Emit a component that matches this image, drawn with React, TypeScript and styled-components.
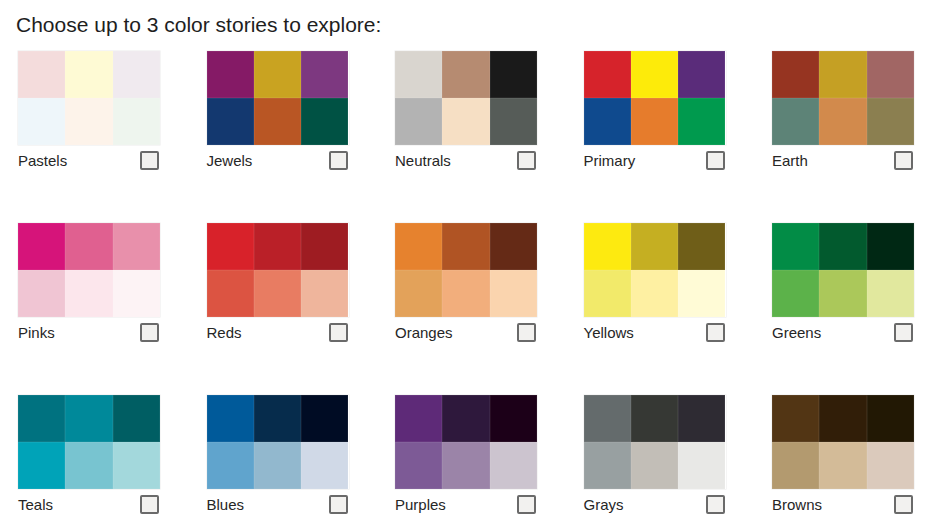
import React, { useState } from 'react';
import styled, { createGlobalStyle } from 'styled-components';

interface Story {
  name: string;
  colors: string[];
}

const stories: Story[] = [
  { name: 'Pastels', colors: ['#f4dcdc', '#fefad4', '#f0eaef', '#eef6fa', '#fdf3ea', '#eef5ee'] },
  { name: 'Jewels', colors: ['#851a66', '#c9a321', '#7d3880', '#13386f', '#b95624', '#005244'] },
  { name: 'Neutrals', colors: ['#d9d5cf', '#b68b71', '#1a1a1a', '#b3b3b3', '#f6dfc4', '#565c58'] },
  { name: 'Primary', colors: ['#d6232b', '#fdeb0a', '#5a2c7a', '#0f4a8e', '#e67c2c', '#009a4e'] },
  { name: 'Earth', colors: ['#963421', '#c5a024', '#a16664', '#5d8377', '#d28a4c', '#8b7f50'] },
  { name: 'Pinks', colors: ['#d6147a', '#e06090', '#e890ab', '#f0c5d3', '#fce6ec', '#fdf3f5'] },
  { name: 'Reds', colors: ['#d8222a', '#ba2028', '#9e1c22', '#dc5442', '#e87c62', '#efb59c'] },
  { name: 'Oranges', colors: ['#e6822e', '#b05424', '#652a16', '#e3a25a', '#f2ae7c', '#fad4ae'] },
  { name: 'Yellows', colors: ['#fdea10', '#c5af22', '#6f5e18', '#f2ea6a', '#fef0a2', '#fffbd6'] },
  { name: 'Greens', colors: ['#028c46', '#025a2e', '#002814', '#5cb24a', '#abc85a', '#e1e89e'] },
  { name: 'Teals', colors: ['#007280', '#00899a', '#005e63', '#00a3b8', '#78c4d0', '#a3d8dc'] },
  { name: 'Blues', colors: ['#005a9a', '#062c4c', '#000c24', '#60a4cd', '#92b8ce', '#d0d9e7'] },
  { name: 'Purples', colors: ['#5e2a78', '#2e183c', '#1c0018', '#7d5a96', '#9b84a8', '#ccc4cf'] },
  { name: 'Grays', colors: ['#646b6c', '#363834', '#2e2b33', '#98a0a1', '#c2beb7', '#e8e8e6'] },
  { name: 'Browns', colors: ['#523514', '#311e08', '#221804', '#b39a6f', '#d3bb98', '#dbcabc'] },
];

const GlobalStyle = createGlobalStyle`
  body {
    margin: 0;
    background: #ffffff;
    font-family: "Liberation Sans", Arial, sans-serif;
    color: #222222;
  }
`;

const Page = styled.div`
  padding: 13px 0 0 16px;
`;

const Title = styled.h2`
  margin: 0 0 14px 0;
  font-size: 21px;
  line-height: 24px;
  font-weight: 400;
  color: #1e1e1e;
`;

const Grid = styled.div`
  display: grid;
  grid-template-columns: repeat(5, 142px);
  column-gap: 46.5px;
  row-gap: 53px;
  padding-left: 2px;
`;

const Card = styled.div`
  display: flex;
  flex-direction: column;
`;

const Swatches = styled.div`
  display: grid;
  grid-template-columns: repeat(3, 1fr);
  grid-template-rows: 47px 47px;
  box-shadow: 0 0 0 0.5px rgba(0, 0, 0, 0.08);
`;

const Cell = styled.div<{ $color: string }>`
  background: ${(p) => p.$color};
  box-shadow: inset 0 0 0 0.5px rgba(255, 255, 255, 0.12);
`;

const LabelRow = styled.label`
  display: flex;
  justify-content: space-between;
  align-items: center;
  margin-top: 6px;
  cursor: pointer;
`;

const Name = styled.span`
  font-size: 15px;
  line-height: 18px;
  color: #262626;
`;

const Box = styled.span<{ $checked: boolean }>`
  width: 15px;
  height: 15px;
  border: 2px solid #6a6a6a;
  border-radius: 2px;
  background: ${(p) => (p.$checked ? '#6a6a6a' : '#f2f1ef')};
  margin-right: 1px;
`;

function StoryCard({ story, checked, toggle }: { story: Story; checked: boolean; toggle(): void }) {
  return (
    <Card>
      <Swatches>
        {story.colors.map((c, i) => (
          <Cell key={i} $color={c} />
        ))}
      </Swatches>
      <LabelRow onClick={toggle}>
        <Name>{story.name}</Name>
        <Box $checked={checked} />
      </LabelRow>
    </Card>
  );
}

export default function App() {
  const [selected, setSelected] = useState<string[]>([]);

  function toggle(name: string) {
    setSelected((prev) => {
      if (prev.includes(name)) return prev.filter((n) => n !== name);
      if (prev.length >= 3) return prev;
      return [...prev, name];
    });
  }

  return (
    <Page>
      <GlobalStyle />
      <Title>Choose up to 3 color stories to explore:</Title>
      <Grid>
        {stories.map((s) => (
          <StoryCard key={s.name} story={s} checked={selected.includes(s.name)} toggle={() => toggle(s.name)} />
        ))}
      </Grid>
    </Page>
  );
}
